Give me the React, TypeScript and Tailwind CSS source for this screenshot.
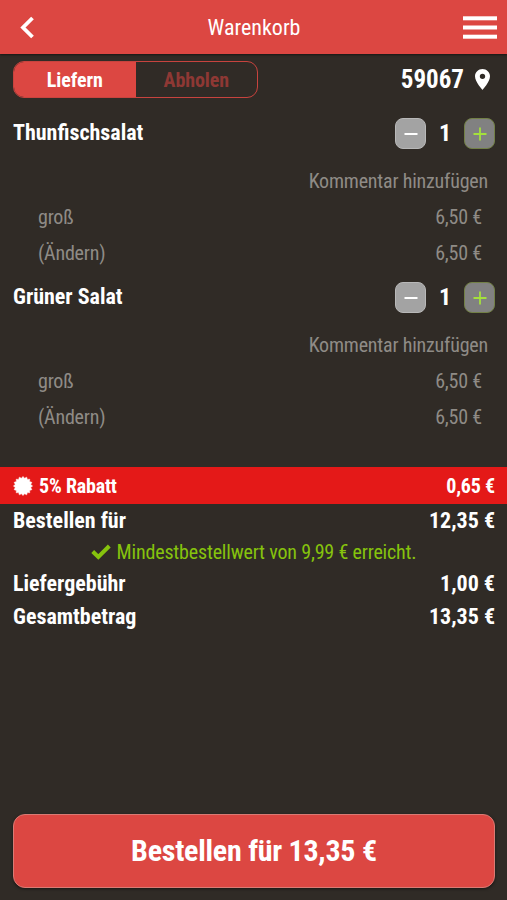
import clsx from "clsx";
import { useState } from "react";

/* ── Cart data ────────────────────────────────── */
const items = [
  { name: "Thunfischsalat", size: "groß", price: "6,50 €" },
  { name: "Grüner Salat", size: "groß", price: "6,50 €" },
];

/* ── Icons ────────────────────────────────────── */
const BackIcon = () => (
  <svg width="15" height="24" viewBox="0 0 15 24" fill="none" stroke="currentColor" strokeWidth="3.8">
    <polyline points="12.5 3 3 12.5 12.5 22" />
  </svg>
);

const MenuIcon = () => (
  <svg width="34" height="24" viewBox="0 0 34 24" fill="currentColor">
    <rect y="1.3" width="34" height="4" />
    <rect y="10.5" width="34" height="4" />
    <rect y="19.7" width="34" height="4" />
  </svg>
);

const PinIcon = () => (
  <svg width="15" height="21" viewBox="5 2 14 20" preserveAspectRatio="none" fill="currentColor">
    <path d="M12 2C8.13 2 5 5.13 5 9c0 5.25 7 13 7 13s7-7.75 7-13c0-3.87-3.13-7-7-7zm0 9.5a2.5 2.5 0 0 1 0-5 2.5 2.5 0 0 1 0 5z" />
  </svg>
);

/* Discount seal, a star with many short blunt tips */
const SealIcon = () => {
  const points = Array.from({ length: 32 }, (_, i) => {
    const r = i % 2 ? 7.9 : 9.6;
    const a = (i * Math.PI) / 16;
    return `${(10 + r * Math.sin(a)).toFixed(2)},${(10 - r * Math.cos(a)).toFixed(2)}`;
  }).join(" ");
  return (
    <svg width="20" height="20" viewBox="0 0 20 20" fill="currentColor" stroke="currentColor" strokeWidth="0.5" strokeLinejoin="round">
      <polygon points={points} />
    </svg>
  );
};

const CheckIcon = () => (
  <svg width="20" height="16" viewBox="0 0 20 16" fill="none" stroke="currentColor" strokeWidth="4">
    <polyline points="1.7 7.5 7.3 13 18.3 2" />
  </svg>
);

const PlusIcon = () => (
  <svg width="14" height="14" viewBox="0 0 14 14" stroke="currentColor" strokeWidth="1.8">
    <path d="M0.5 7h13M7 0.5v13" />
  </svg>
);

const MinusIcon = () => (
  <svg width="14" height="14" viewBox="0 0 14 14" stroke="currentColor" strokeWidth="2">
    <path d="M0.5 7h13" />
  </svg>
);

/* ── Rows ─────────────────────────────────────── */
const CartItem = ({ name, size, price }: { name: string; size: string; price: string }) => {
  const [count, setCount] = useState(1);

  return (
    <li className="h-[164px] text-[20px] tracking-[-0.2px] text-[#8f8b86]">
      <div className="flex h-[49px] justify-between pr-3 pl-[13px] text-white">
        <span className="pt-0.5 text-[22px] leading-[32px] font-bold tracking-normal">{name}</span>
        <div className="flex items-center self-start pt-[3px]">
          <button
            onClick={() => setCount(Math.max(1, count - 1))}
            className="flex size-[31px] items-center justify-center rounded-[8px] border border-[#b8b8b8] bg-[#a3a3a3]"
          >
            <MinusIcon />
          </button>
          <span className="w-[38px] text-center text-[24px] leading-[31px] font-bold">{count}</span>
          <button
            onClick={() => setCount(count + 1)}
            className="flex size-[31px] items-center justify-center rounded-[8px] border border-[#728046] bg-[#818181] text-[#a4e03c]"
          >
            <PlusIcon />
          </button>
        </div>
      </div>
      <div className="h-[36px] pr-[19px] text-right leading-[34px]">Kommentar hinzufügen</div>
      <div className="flex h-[35px] justify-between pr-[25px] pl-[38px] leading-[35px]">
        <span>{size}</span>
        <span>{price}</span>
      </div>
      <div className="flex h-[35px] justify-between pr-[25px] pl-[38px] leading-[36px]">
        <span>(Ändern)</span>
        <span>{price}</span>
      </div>
    </li>
  );
};

const TotalRow = ({ label, value }: { label: string; value: string }) => (
  <div className="flex h-[33px] items-center justify-between pr-3 pl-[13px] text-[22px] font-bold">
    <span>{label}</span>
    <span>{value}</span>
  </div>
);

export default function App() {
  const [mode, setMode] = useState("Liefern");

  return (
    <div className="flex h-[900px] w-full flex-col bg-[#302b26] font-['Roboto_Condensed',Roboto,sans-serif] text-white [font-stretch:75%]">
      <header className="flex h-[54px] shrink-0 items-center justify-between bg-[#dc4742] pr-[10px] pl-[20px] shadow-[0_1px_2px_rgba(0,0,0,0.5)]">
        <div className="flex w-[25px]">
          <BackIcon />
        </div>
        <h1 className="text-[22px]">Warenkorb</h1>
        <MenuIcon />
      </header>

      <div className="flex h-[61px] shrink-0 items-start justify-between pt-[7px] pr-[17px] pl-[13px]">
        <div className="flex h-[37px] w-[245px] overflow-hidden rounded-[11px] border border-[#c7433e] text-[20px] font-bold tracking-[-0.1px]">
          {["Liefern", "Abholen"].map((label) => (
            <button
              key={label}
              onClick={() => setMode(label)}
              className={clsx("flex-1", mode === label ? "bg-[#dc4742] text-white" : "text-[#8e3834]")}
            >
              {label}
            </button>
          ))}
        </div>
        <div className="flex h-[37px] items-center gap-[11px] text-[25px] font-bold">
          <span>59067</span>
          <PinIcon />
        </div>
      </div>

      <ul className="h-[352px] shrink-0">
        {items.map((item) => (
          <CartItem key={item.name} {...item} />
        ))}
      </ul>

      <div className="flex h-[37px] shrink-0 items-center justify-between bg-[#e41918] pr-3 pl-[13px] text-[20px] font-bold tracking-[-0.2px]">
        <span className="flex items-center gap-[6px]">
          <SealIcon />
          5% Rabatt
        </span>
        <span>0,65 €</span>
      </div>

      <TotalRow label="Bestellen für" value="12,35 €" />
      <div className="flex h-[30px] items-center justify-center gap-[6px] text-[20px] tracking-[-0.18px] text-[#86c30d]">
        <CheckIcon />
        Mindestbestellwert von 9,99 € erreicht.
      </div>
      <TotalRow label="Liefergebühr" value="1,00 €" />
      <TotalRow label="Gesamtbetrag" value="13,35 €" />

      <button className="mr-3 mt-auto mb-[12px] ml-[13px] h-[74px] rounded-[12px] border border-[#d97b74] bg-[#dc4742] pb-0.5 text-[30px] font-bold tracking-[-0.25px] shadow-[0_1px_3px_rgba(0,0,0,0.5)]">
        Bestellen für 13,35 €
      </button>
    </div>
  );
}
